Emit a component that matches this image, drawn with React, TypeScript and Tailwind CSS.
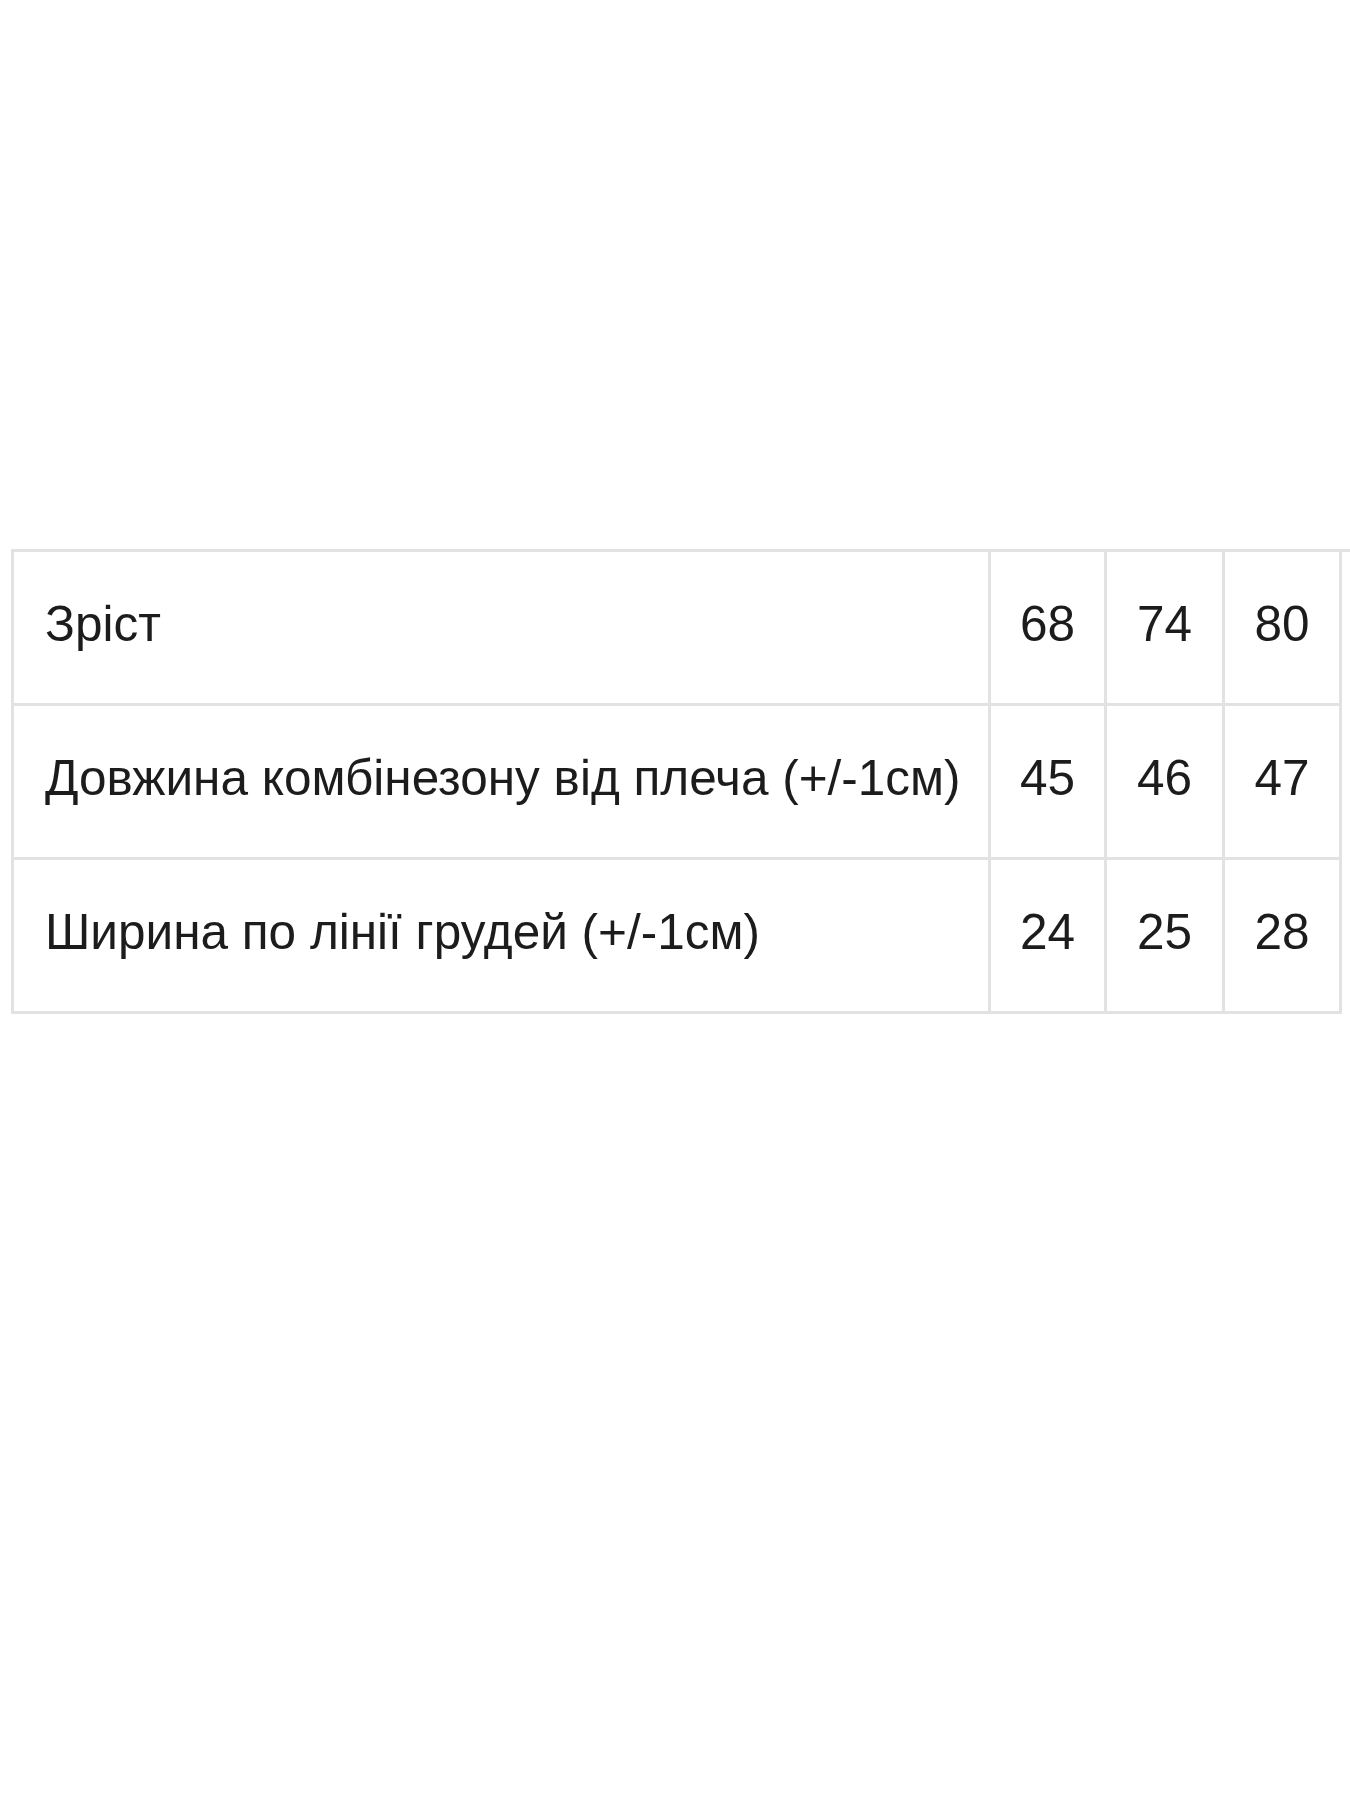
const rows: [string, string, string, string][] = [
  ["Зріст", "68", "74", "80"],
  ["Довжина комбінезону від плеча (+/-1см)", "45", "46", "47"],
  ["Ширина по лінії грудей (+/-1см)", "24", "25", "28"],
];

export default function App() {
  return (
    <div className="min-h-[1800px] w-[1350px] overflow-hidden bg-white pt-[549px] pl-[11px] font-['Liberation_Sans',Arial,sans-serif] text-[49.5px] text-[#1c1c1c]">
      <table className="w-[1345px] table-fixed border-collapse">
        <colgroup>
          <col className="w-[977px]" />
          <col className="w-[116px]" />
          <col className="w-[118px]" />
          <col className="w-[117px]" />
          <col className="w-[17px]" />
        </colgroup>
        <tbody>
          {rows.map((row, r) => (
            <tr key={row[0]} className="h-[154px]">
              <td className="whitespace-nowrap border-[3px] border-[#e2e2e2] pb-[7px] pl-[31px]">{row[0]}</td>
              {row.slice(1).map((v, i) => (
                <td key={i} className="border-[3px] border-[#e2e2e2] pb-[7px] text-center">{v}</td>
              ))}
              <td className={r === 0 ? "border-t-[3px] border-[#e2e2e2]" : ""} />
            </tr>
          ))}
        </tbody>
      </table>
    </div>
  );
}
